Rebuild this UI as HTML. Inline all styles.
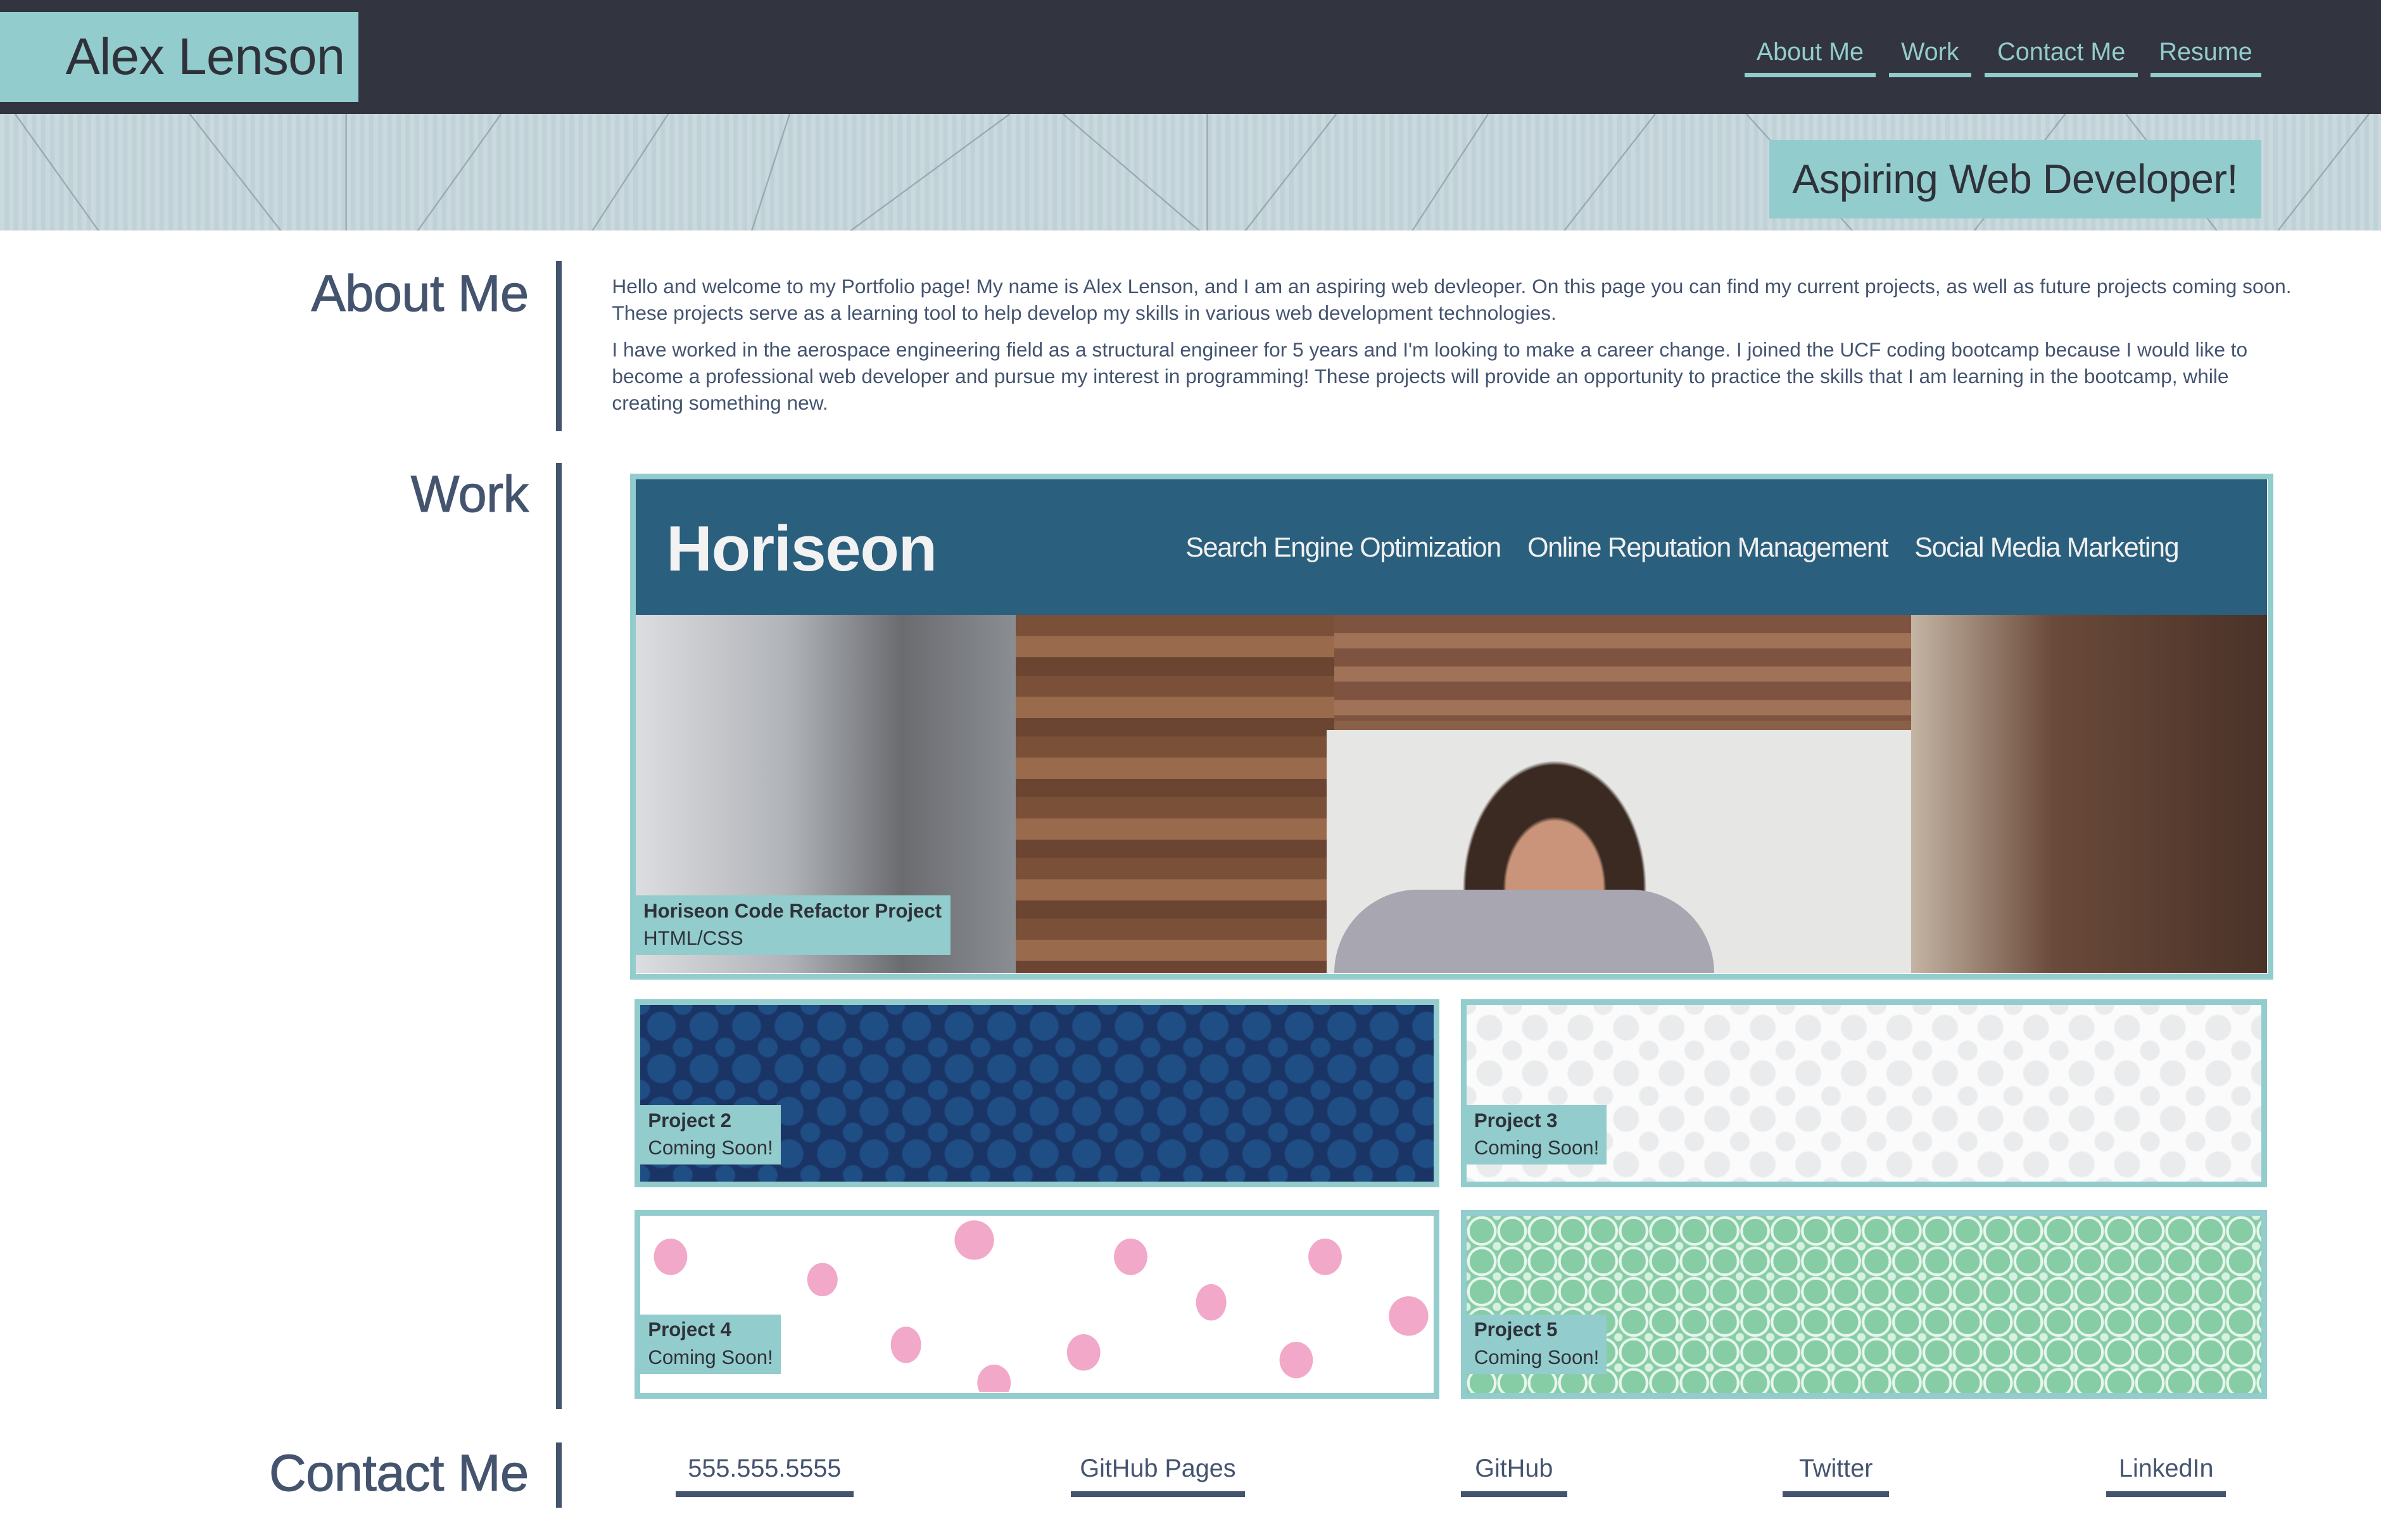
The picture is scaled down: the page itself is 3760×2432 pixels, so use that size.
<!DOCTYPE html>
<html><head><meta charset="utf-8">
<style>
html,body{margin:0;padding:0;background:#fff;}
body{width:3760px;height:2432px;overflow:hidden;}
#w{zoom:2.398;width:1568px;height:1014px;position:relative;font-family:"Liberation Sans",sans-serif;}
.abs{position:absolute;}
.hdr{left:0;top:0;width:1568px;height:75px;background:#32343f;}
.name{left:0;top:8px;width:236px;height:59px;background:#93cccc;color:#2f323b;font-size:34px;line-height:59px;text-align:right;box-sizing:border-box;padding-right:9px;letter-spacing:-0.3px}
.nav a{position:absolute;top:25px;color:#93cccc;font-size:16.5px;text-align:center;border-bottom:3px solid #93cccc;padding-bottom:3px;text-decoration:none;height:20px}
.hero{left:0;top:75px;width:1568px;height:77px;background:#bccfd5;overflow:hidden}
.tag{left:1165px;top:92px;width:324px;height:52px;background:#93cccc;color:#2f323b;font-size:27px;line-height:52px;text-align:center;letter-spacing:-0.2px}
.h2{color:#44546f;font-size:34px;text-align:right;width:348px;left:0;letter-spacing:-0.3px;-webkit-text-stroke:0.4px #44546f}
.bar{left:366px;width:4px;background:#44546f}
.p{left:403px;width:1110px;color:#44546f;font-size:13.2px;line-height:17.5px}
.p p{margin:0 0 7px 0}
.card{box-sizing:border-box;border:4px solid #93cccc;overflow:hidden}
.lbl{position:absolute;left:0;background:#93cccc;color:#2f323b;font-size:13px;line-height:18px;padding:1px 5px 2px 5px}
.lbl b{font-weight:bold}
.ct a{position:absolute;top:958px;color:#44546f;font-size:16.5px;text-align:center;border-bottom:4px solid #44546f;padding-bottom:3px;height:21px;text-decoration:none}
</style></head><body><div id="w">
<div class="abs hdr"></div>
<div class="abs name">Alex Lenson</div>
<div class="nav">
<a style="left:1149px;width:86px">About Me</a>
<a style="left:1244px;width:54px">Work</a>
<a style="left:1307px;width:101px">Contact Me</a>
<a style="left:1416px;width:73px">Resume</a>
</div>
<div class="abs hero">
<svg width="1568" height="77" style="position:absolute;left:0;top:0">
<rect width="1568" height="77" fill="#c0d2d8"/>
<rect width="1568" height="77" fill="url(#g)" opacity=".25"/>
<defs><pattern id="g" width="6" height="6" patternUnits="userSpaceOnUse"><rect width="3" height="6" fill="#e4eef0"/></pattern></defs>
<g stroke="#7d8d94" stroke-width="1" fill="none" opacity=".6">
<line x1="10" y1="0" x2="65" y2="77"/><line x1="125" y1="0" x2="185" y2="77"/>
<line x1="228" y1="0" x2="228" y2="77"/><line x1="330" y1="0" x2="275" y2="77"/>
<line x1="440" y1="0" x2="390" y2="77"/><line x1="520" y1="0" x2="495" y2="77"/>
<line x1="560" y1="77" x2="665" y2="0"/><line x1="700" y1="0" x2="790" y2="77"/>
<line x1="795" y1="0" x2="795" y2="77"/><line x1="880" y1="0" x2="820" y2="77"/>
<line x1="980" y1="0" x2="930" y2="77"/><line x1="1090" y1="0" x2="1030" y2="77"/>
<line x1="1150" y1="0" x2="1220" y2="77"/><line x1="1300" y1="77" x2="1360" y2="0"/>
<line x1="1500" y1="77" x2="1560" y2="0"/><line x1="1400" y1="0" x2="1460" y2="77"/>
</g></svg>
</div>
<div class="abs tag">Aspiring Web Developer!</div>

<div class="abs h2" style="top:174px">About Me</div>
<div class="abs bar" style="top:172px;height:112px"></div>
<div class="abs p" style="top:180px">
<p>Hello and welcome to my Portfolio page! My name is Alex Lenson, and I am an aspiring web devleoper. On this page you can find my current projects, as well as future projects coming soon. These projects serve as a learning tool to help develop my skills in various web development technologies.</p>
<p>I have worked in the aerospace engineering field as a structural engineer for 5 years and I'm looking to make a career change. I joined the UCF coding bootcamp because I would like to become a professional web developer and pursue my interest in programming! These projects will provide an opportunity to practice the skills that I am learning in the bootcamp, while creating something new.</p>
</div>

<div class="abs h2" style="top:306px">Work</div>
<div class="abs bar" style="top:305px;height:623px"></div>

<div class="abs card" style="left:415px;top:312px;width:1082px;height:333px">
<div style="position:absolute;left:0;top:0;width:1074px;height:89px;background:#2a5f7d"></div>
<div style="position:absolute;left:20px;top:22px;color:#f2f2f2;font-size:42px;font-weight:bold;letter-spacing:-0.5px">Horiseon</div>
<div style="position:absolute;left:362px;top:35px;color:#f0f0f0;font-size:18px;white-space:nowrap;letter-spacing:-0.6px">Search Engine Optimization&nbsp;&nbsp;&nbsp;&nbsp;Online Reputation Management&nbsp;&nbsp;&nbsp;&nbsp;Social Media Marketing</div>
<div style="position:absolute;left:0;top:89px;width:1074px;height:236px;background:#8a6048"></div>
<div style="position:absolute;left:0;top:89px;width:250px;height:236px;background:linear-gradient(90deg,#dcdde0,#b0b3b8 40%,#6a6c70 70%,#8a8d92)"></div>
<div style="position:absolute;left:250px;top:89px;width:210px;height:236px;background:repeating-linear-gradient(180deg,#7a5038 0 14px,#9a6a4c 14px 28px,#6b4532 28px 40px)"></div>
<div style="position:absolute;left:460px;top:89px;width:380px;height:70px;background:repeating-linear-gradient(180deg,#7e5440 0 12px,#a07258 12px 22px)"></div>
<div style="position:absolute;left:455px;top:165px;width:390px;height:160px;background:#e6e6e4"></div>
<div style="position:absolute;left:840px;top:89px;width:234px;height:236px;background:linear-gradient(90deg,#c4b4a4,#6a4a3a 40%,#4a3228)"></div>
<div style="position:absolute;left:530px;top:165px;width:150px;height:160px;background:radial-gradient(ellipse at 50% 65%,#c9947a 0 30%,#3a2a22 32% 55%,transparent 57%)"></div>
<div style="position:absolute;left:460px;top:270px;width:250px;height:55px;background:#a8a6b0;border-radius:60px 60px 0 0"></div>
<div class="lbl" style="top:274px;width:197px"><b>Horiseon Code Refactor Project</b><br>HTML/CSS</div>
</div>

<div class="abs card" style="left:418px;top:658px;width:530px;height:124px;background:#1a3466">
<div style="position:absolute;inset:0;background:radial-gradient(circle,#1f4e84 0 9px,transparent 10px) 0 0/28px 28px,radial-gradient(circle,#1f4e84 0 6px,transparent 7px) 14px 14px/28px 28px"></div>
<div class="lbl" style="top:66px"><b>Project 2</b><br>Coming Soon!</div></div>
<div class="abs card" style="left:962px;top:658px;width:531px;height:124px;background:#fbfbfb">
<div style="position:absolute;inset:0;background:radial-gradient(circle,#e9ebec 0 8px,transparent 9px) 0 0/30px 30px,radial-gradient(circle,#e9ebec 0 6px,transparent 7px) 15px 15px/30px 30px"></div>
<div class="lbl" style="top:66px"><b>Project 3</b><br>Coming Soon!</div></div>
<div class="abs card" style="left:418px;top:797px;width:530px;height:124px;background:#fff">
<svg width="522" height="116" style="position:absolute;left:0;top:0"><g fill="#f2a8c8">
<ellipse cx="20" cy="27" rx="11" ry="12"/><ellipse cx="120" cy="42" rx="10" ry="11"/><ellipse cx="220" cy="16" rx="13" ry="13"/><ellipse cx="323" cy="27" rx="11" ry="12"/><ellipse cx="376" cy="57" rx="10" ry="12"/><ellipse cx="451" cy="27" rx="11" ry="12"/><ellipse cx="506" cy="66" rx="13" ry="13"/><ellipse cx="175" cy="85" rx="10" ry="12"/><ellipse cx="292" cy="90" rx="11" ry="12"/><ellipse cx="432" cy="95" rx="11" ry="12"/><ellipse cx="233" cy="110" rx="11" ry="12"/></g></svg>
<div class="lbl" style="top:65px"><b>Project 4</b><br>Coming Soon!</div></div>
<div class="abs card" style="left:962px;top:797px;width:531px;height:124px;background:#86cda5">
<div style="position:absolute;inset:0;background:radial-gradient(circle,transparent 0 8px,#e8f6ee 8px 9.5px,transparent 10px) 0 0/20px 20px,radial-gradient(circle,#d8f0e2 0 2.5px,transparent 3px) 10px 10px/20px 20px"></div>
<div class="lbl" style="top:65px"><b>Project 5</b><br>Coming Soon!</div></div>

<div class="abs h2" style="top:951px">Contact Me</div>
<div class="abs bar" style="top:950px;height:43px"></div>
<div class="ct">
<a style="left:445px;width:117px">555.555.5555</a>
<a style="left:705px;width:115px">GitHub Pages</a>
<a style="left:962px;width:70px">GitHub</a>
<a style="left:1174px;width:70px">Twitter</a>
<a style="left:1387px;width:79px">LinkedIn</a>
</div>
</div></body></html>
